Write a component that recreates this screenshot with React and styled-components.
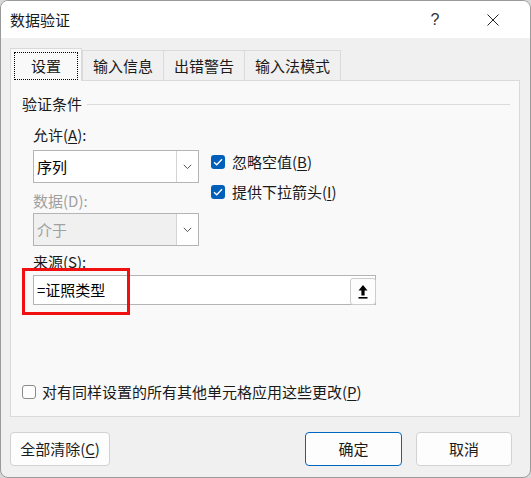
import React from 'react';
import styled, { createGlobalStyle, css } from 'styled-components';

const GlobalStyle = createGlobalStyle`
	html, body {
		margin: 0;
		padding: 0;
		background: #d8d8d8;
	}
	body {
		font-family: "Noto Sans CJK SC", "Noto Sans", sans-serif;
	}
	* {
		box-sizing: border-box;
	}
`;

const Dialog = styled.div`
	width: 531px;
	height: 478px;
	border: 1px solid #9a9a9a;
	border-radius: 8px;
	overflow: hidden;
	background: #f0f0f0;
	display: flex;
	flex-direction: column;
	font-size: 15px;
	line-height: 20px;
	color: #1a1a1a;
`;

const TitleBar = styled.div`
	height: 37px;
	flex: none;
	background: #ffffff;
	display: flex;
	align-items: center;
	padding: 0 8px 0 9px;
`;

const Title = styled.div`
	flex: 1;
	padding-top: 1px;
`;

const CaptionButton = styled.div`
	width: 58px;
	height: 37px;
	display: flex;
	align-items: center;
	justify-content: center;
	color: #333;
	font-family: "Liberation Sans", sans-serif;
	font-size: 16px;
	font-weight: 300;
`;

const Body = styled.div`
	flex: 1;
	padding: 10px 10px 0 9px;
	display: flex;
	flex-direction: column;
`;

const TabRow = styled.div`
	display: flex;
	align-items: flex-end;
	height: 32px;
`;

const Tab = styled.div`
	height: 30px;
	padding: 0 10px;
	display: flex;
	align-items: center;
	justify-content: center;
	border: 1px solid #dadada;
	border-bottom: none;
	margin-right: -1px;
	background: #f0f0f0;
	position: relative;

	${props => props.active && css`
		height: 33px;
		min-width: 72px;
		margin-bottom: -1px;
		margin-right: 0;
		background: #f9f9f9;
		z-index: 1;
		padding: 3px 3px 1px;
	`}
`;

const FocusRing = styled.span`
	flex: 1;
	align-self: stretch;
	display: flex;
	align-items: center;
	justify-content: center;
	border: 1px dotted #000;
`;

const Panel = styled.div`
	width: 510px;
	height: 337px;
	border: 1px solid #dadada;
	background: #f9f9f9;
	padding: 13px 9px 14px 11px;
	display: flex;
	flex-direction: column;
`;

const Legend = styled.div`
	display: flex;
	align-items: center;
	gap: 5px;

	&::after {
		content: "";
		flex: 1;
		height: 1px;
		background: #dcdcdc;
	}
`;

const Conditions = styled.div`
	margin: 11px 0 0 11px;
	display: flex;
`;

const LeftColumn = styled.div`
	width: 166px;
	display: flex;
	flex-direction: column;
`;

const RightColumn = styled.div`
	margin-left: 12px;
	padding-top: 27px;
	display: flex;
	flex-direction: column;
	gap: 10px;
`;

const FieldLabel = styled.div`
	color: ${props => (props.disabled ? '#a0a0a0' : '#1a1a1a')};
	margin-top: ${props => props.gap || 0}px;
	margin-left: ${props => props.indent || 0}px;
`;

const Key = styled.span`
	text-decoration: underline;
	text-underline-offset: 2px;
`;

const Select = styled.div`
	height: 33px;
	margin-top: ${props => props.gap || 0}px;
	border: 1px solid #b4b4b4;
	background: ${props => (props.disabled ? '#f0f0f0' : '#ffffff')};
	color: ${props => (props.disabled ? '#a0a0a0' : '#000')};
	display: flex;
	align-items: center;
	padding-left: 3px;
`;

const SelectText = styled.span`
	flex: 1;
`;

const DropButton = styled.div`
	width: 22px;
	align-self: stretch;
	background: #ffffff;
	border-left: 1px solid #d4d4d4;
	display: flex;
	align-items: center;
	justify-content: center;
`;

const CheckRow = styled.label`
	display: flex;
	align-items: center;
	gap: 7px;
	height: 20px;
`;

const Box = styled.span`
	width: 14px;
	height: 14px;
	border-radius: 3px;
	flex: none;
	display: flex;
	align-items: center;
	justify-content: center;
	${props => props.checked ? css`
		background: #005fb8;
	` : css`
		border: 1px solid #8b8b8b;
		background: #fdfdfd;
	`}
`;

const SourceField = styled.div`
	position: relative;
	margin: 3px 0 0 11px;
	width: 343px;
	height: 30px;
	border: 1px solid #b4b4b4;
	background: #ffffff;
	display: flex;
	align-items: flex-end;
	padding-left: 3px;
`;

const SourceText = styled.span`
	flex: 1;
	align-self: center;
	color: #000;
`;

const CollapseButton = styled.div`
	width: 26px;
	height: 27px;
	margin: 0 -1px -1px 0;
	border: 1px solid #cccccc;
	border-radius: 3px;
	background: #fdfdfd;
	display: flex;
	align-items: center;
	justify-content: center;
`;

const Highlight = styled.div`
	position: absolute;
	left: -12px;
	top: -8px;
	width: 108px;
	height: 47px;
	border: 3px solid #f01010;
	pointer-events: none;
`;

const ApplyAll = styled(CheckRow)`
	margin-top: auto;
	gap: 6px;
`;

const Footer = styled.div`
	display: flex;
	align-items: center;
	padding: 15px 8px 0 0;
	gap: 14px;
`;

const Button = styled.div`
	width: ${props => props.width}px;
	height: 34px;
	border: 1px solid ${props => (props.primary ? '#0067c0' : '#d2d2d2')};
	border-radius: 4px;
	background: #fdfdfd;
	display: flex;
	align-items: center;
	justify-content: center;
	color: #1a1a1a;
	margin-right: ${props => (props.push ? 'auto' : '0')};
`;

const Chevron = () => (
	<svg width="9" height="6" viewBox="0 0 9 6">
		<path d="M0.8 0.8 L4.5 4.6 L8.2 0.8" fill="none" stroke="#555" strokeWidth="1" />
	</svg>
);

const Check = () => (
	<svg width="10" height="8" viewBox="0 0 10 8">
		<path d="M1 4.2 L3.7 6.7 L9 1.2" fill="none" stroke="#fff" strokeWidth="1.4" />
	</svg>
);

const UploadArrow = () => (
	<svg width="12" height="16" viewBox="0 0 12 16">
		<path d="M6 1 L10.5 6.5 H7.6 V11.5 H4.4 V6.5 H1.5 Z" fill="#000" />
		<rect x="1.5" y="13" width="9" height="1.6" fill="#000" />
	</svg>
);

const CloseIcon = () => (
	<svg width="12" height="12" viewBox="0 0 12 12">
		<path d="M0.5 0.5 L11.5 11.5 M11.5 0.5 L0.5 11.5" stroke="#222" strokeWidth="1" />
	</svg>
);

const tabs = ['设置', '输入信息', '出错警告', '输入法模式'];

const App = () => (
	<>
		<GlobalStyle />
		<Dialog>
			<TitleBar>
				<Title>数据验证</Title>
				<CaptionButton>?</CaptionButton>
				<CaptionButton><CloseIcon /></CaptionButton>
			</TitleBar>
			<Body>
				<TabRow>
					{tabs.map((t, i) => (
						<Tab key={t} active={i === 0}>
							{i === 0 ? <FocusRing>{t}</FocusRing> : t}
						</Tab>
					))}
				</TabRow>
				<Panel>
					<Legend>验证条件</Legend>
					<Conditions>
						<LeftColumn>
							<FieldLabel>允许(<Key>A</Key>):</FieldLabel>
							<Select gap={5}>
								<SelectText>序列</SelectText>
								<DropButton><Chevron /></DropButton>
							</Select>
							<FieldLabel disabled gap={8}>数据(D):</FieldLabel>
							<Select disabled gap={2}>
								<SelectText>介于</SelectText>
								<DropButton><Chevron /></DropButton>
							</Select>
						</LeftColumn>
						<RightColumn>
							<CheckRow>
								<Box checked><Check /></Box>
								<span>忽略空值(<Key>B</Key>)</span>
							</CheckRow>
							<CheckRow>
								<Box checked><Check /></Box>
								<span>提供下拉箭头(<Key>I</Key>)</span>
							</CheckRow>
						</RightColumn>
					</Conditions>
					<FieldLabel gap={6} indent={11}>来源(<Key>S</Key>):</FieldLabel>
					<SourceField>
						<SourceText>=证照类型</SourceText>
						<CollapseButton><UploadArrow /></CollapseButton>
						<Highlight />
					</SourceField>
					<ApplyAll>
						<Box />
						<span>对有同样设置的所有其他单元格应用这些更改(<Key>P</Key>)</span>
					</ApplyAll>
				</Panel>
				<Footer>
					<Button width={100} push>全部清除(<Key>C</Key>)</Button>
					<Button width={97} primary>确定</Button>
					<Button width={96}>取消</Button>
				</Footer>
			</Body>
		</Dialog>
	</>
);

export default App;
